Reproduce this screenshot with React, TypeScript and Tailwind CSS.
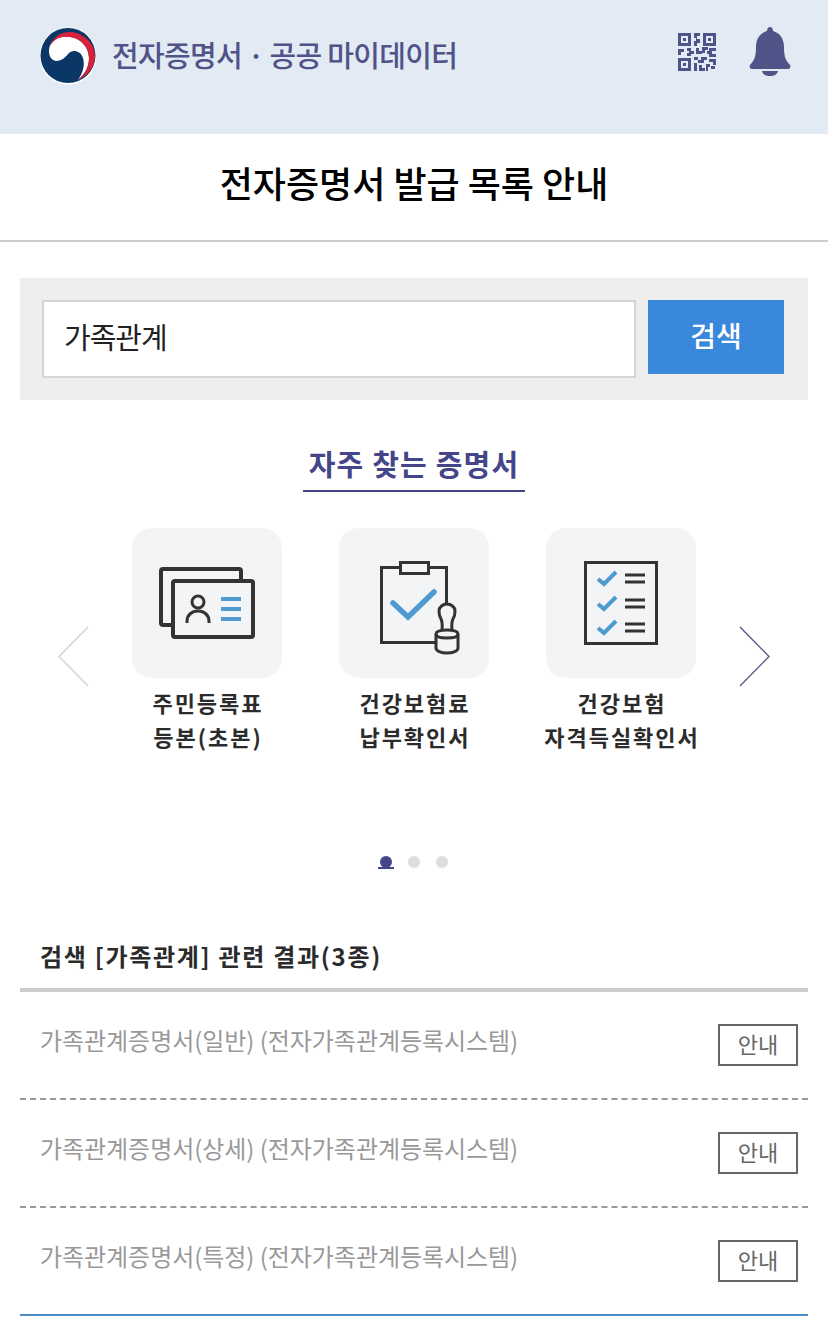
const font = { fontFamily: '"Noto Sans CJK KR", "Noto Sans", sans-serif' };

function Logo() {
  return (
    <svg width="58" height="58" viewBox="0 0 58 58" className="shrink-0">
      <circle cx="29" cy="29" r="28.5" fill="#fff" />
      <circle cx="29" cy="28.5" r="27.5" fill="#0b3766" />
      <path d="M10 24C10 14 19 9 29 10C41 10 50 20 50 31C50 40 46 47 39 53C44 46 46 38 44 31C42 24 34 22 30 26C26 31 22 34 17 34C12 33 10 29 10 24Z" fill="#fff" />
      <path d="M10 21C13 11 22 4 33 5C47 7 57 19 56 31C55 41 48 49 39 53C46 47 50 40 50 31C50 20 41 10 29 10C20 9 13 14 10 21Z" fill="#d9213c" />
    </svg>
  );
}

function QrIcon() {
  return (
    <svg width="38" height="38" viewBox="0 0 38 38" fill="#505388">
      <path fillRule="evenodd" d="M0 0H13V13H0ZM3 3V10H10V3ZM25 0H38V13H25ZM28 3V10H35V3ZM0 25H13V38H0ZM3 28V35H10V28Z" />
      <path d="M5 5H8V8H5ZM30 5H33V8H30ZM5 30H8V33H5ZM16 0H22V3H19V6H22V10H19V13H16V8H18V5H16ZM0 16H6V19H3V22H0ZM9 15H13V18H16V21H13V23H9V20H11V18H9ZM18 15H21V18H24V21H18ZM24 14H30V17H27V20H24ZM31 15H38V18H34V21H38V24H31V21H29V18H31ZM16 24H20V27H23V24H29V27H26V30H20V27H16ZM31 26H38V32H35V29H31ZM16 30H19V38H16ZM21 32H24V35H27V38H21ZM28 31H32V34H30V38H28ZM33 33H37V36H33Z" />
    </svg>
  );
}

function BellIcon() {
  return (
    <svg width="42" height="50" viewBox="0 0 42 50" fill="#505388">
      <path d="M21 0C23 0 24 2 24 4C31 6 35 12 35 20C35 28 36 33 41 38C42 40 41 42 39 42H3C1 42 0 40 1 38C6 33 7 28 7 20C7 12 11 6 18 4C18 2 19 0 21 0Z" />
      <path d="M13 44H29C28 48 25 49 21 49C17 49 14 48 13 44Z" />
    </svg>
  );
}

function Chevron({ right }: { right?: boolean }) {
  return (
    <svg width="32" height="62" viewBox="0 0 32 62" fill="none" stroke={right ? "#505388" : "#cfcfd8"} strokeWidth="1.3">
      <path d={right ? "M1 1L30 30.5L1 60" : "M31 1L2 30.5L31 60"} />
    </svg>
  );
}

function CardsIcon() {
  return (
    <svg width="150" height="150" viewBox="0 0 150 150" fill="none">
      <path d="M41 97H31A2 2 0 0 1 29 95V43A2 2 0 0 1 31 41H107A2 2 0 0 1 109 43V53" stroke="#333" strokeWidth="4" />
      <rect x="41" y="53" width="80" height="56" rx="2" stroke="#333" strokeWidth="4" />
      <circle cx="66" cy="74" r="6" stroke="#333" strokeWidth="3" />
      <path d="M55 95V93C55 87 60 83 66 83C72 83 77 87 77 93V95" stroke="#333" strokeWidth="3" />
      <path d="M89 71H109M89 81H109M89 91H109" stroke="#4f9bd1" strokeWidth="4" />
    </svg>
  );
}

function ClipboardIcon() {
  return (
    <svg width="150" height="150" viewBox="0 0 150 150" fill="none">
      <path d="M97 114.5H42.500V39.500H107.500V75" stroke="#333" strokeWidth="3" />
      <rect x="61.500" y="34.500" width="28" height="11" fill="#f3f4f6" stroke="#333" strokeWidth="3" />
      <path d="M54 75L69 89L95 64" stroke="#4f9bd1" strokeWidth="5.5" strokeLinecap="round" />
      <path d="M103 105C103 98 104 95 102 91C100 88 100 85 100 83C100 79 104 76 108 76C112 76 116 79 116 83C116 85 116 88 114 91C112 95 113 98 113 105Z" stroke="#333" strokeWidth="3" fill="#f3f4f6" />
      <path d="M97 106C97 103 101 102 108 102C115 102 119 103 119 106V120C119 123 114 125 108 125C102 125 97 123 97 120Z" stroke="#333" strokeWidth="3" fill="#f3f4f6" />
      <path d="M97 106C97 109 102 110 108 110C114 110 119 109 119 106" stroke="#333" strokeWidth="3" />
    </svg>
  );
}

function ChecklistIcon() {
  return (
    <svg width="150" height="150" viewBox="0 0 150 150" fill="none">
      <rect x="39.500" y="34.500" width="71" height="81" stroke="#333" strokeWidth="3" />
      <path d="M52 51L58 56L70 44M52 76L58 81L70 69M52 100L58 105L70 93" stroke="#4f9bd1" strokeWidth="4" />
      <path d="M79 47H99M79 54H99M79 72H99M79 79H99M79 96H99M79 103H99" stroke="#333" strokeWidth="3" />
    </svg>
  );
}

function Cert({ icon, lines, w }: { icon: React.ReactNode; lines: string[]; w: string }) {
  return (
    <div className={`flex flex-col items-center ${w}`}>
      <div className="w-[150px] h-[150px] rounded-[20px] bg-[#f3f4f6]">{icon}</div>
      <div className="mt-[7px] text-[22px] leading-[34px] font-bold tracking-[2px] pl-[2px] text-[#2b2b2b] text-center whitespace-nowrap">
        {lines.map((l) => (
          <div key={l}>{l}</div>
        ))}
      </div>
    </div>
  );
}

function Row({ text, border }: { text: string; border: string }) {
  return (
    <div className={`h-[108px] flex justify-between pl-[20px] pr-[10px] ${border}`}>
      <div className="pt-[31px] text-[24px] leading-[34px] tracking-[-0.05px] text-[#999]">{text}</div>
      <div className="mt-[32px] w-[80px] h-[42px] border-2 border-[#666] flex items-center justify-center text-[22px] text-[#666] pb-[4px]">
        안내
      </div>
    </div>
  );
}

export default function App() {
  return (
    <div className="w-[828px] h-[1323px] bg-white overflow-hidden" style={font}>
      <header className="h-[134px] bg-[#e2eaf3] flex items-start justify-between pl-[39px] pr-[37px] pt-[27px]">
        <div className="flex items-center gap-[15px]">
          <Logo />
          <span className="text-[29px] leading-[54px] font-medium tracking-[-0.7px] text-[#505388] whitespace-nowrap pb-[4px]">
            전자증명서 · 공공 마이데이터
          </span>
        </div>
        <div className="flex items-center gap-[33px]">
          <QrIcon />
          <BellIcon />
        </div>
      </header>

      <h1 className="h-[108px] border-b-2 border-[#ccc] flex items-center justify-center text-[36px] font-medium text-black pb-[10px]">
        전자증명서 발급 목록 안내
      </h1>

      <div className="mx-[20px] mt-[36px] h-[122px] bg-[#eee] pl-[22px] pr-[24px] pt-[22px] flex items-start gap-[12px]">
        <div className="w-[594px] h-[78px] border-2 border-[#d5d5d5] bg-white flex items-center pl-[20px] pb-[4px] text-[29px] text-[#222] tracking-[-1px]">
          가족관계
        </div>
        <div className="w-[136px] h-[74px] bg-[#3a88dc] flex items-center justify-center pb-[4px] text-[28px] font-medium text-white">
          검색
        </div>
      </div>

      <div className="flex justify-center mt-[44px]">
        <h2 className="w-[222px] h-[48px] border-b-2 border-[#45458a] text-center text-[29px] leading-[38px] font-bold text-[#45458a] tracking-[1.2px]">
          자주 찾는 증명서
        </h2>
      </div>

      <div className="flex items-start mt-[36px] pl-[57px]">
        <div className="pt-[98px] w-[75px]">
          <Chevron />
        </div>
        <div className="flex gap-[57px]">
          <Cert icon={<CardsIcon />} lines={["주민등록표", "등본(초본)"]} w="w-[150px]" />
          <Cert icon={<ClipboardIcon />} lines={["건강보험료", "납부확인서"]} w="w-[150px]" />
          <Cert icon={<ChecklistIcon />} lines={["건강보험", "자격득실확인서"]} w="w-[150px]" />
        </div>
        <div className="pt-[98px] pl-[43px]">
          <Chevron right />
        </div>
      </div>

      <div className="flex justify-center gap-[14px] mt-[103px] h-[13px] pr-[2px]">
        <div className="w-[16px] h-[13px] border-b-2 border-[#45458a] flex justify-center overflow-hidden">
          <div className="w-[12px] h-[12px] shrink-0 rounded-full bg-[#45458a]" />
        </div>
        <div className="w-[12px] h-[12px] rounded-full bg-[#ddd]" />
        <div className="w-[12px] h-[12px] ml-[2px] rounded-full bg-[#ddd]" />
      </div>

      <div className="mx-[20px] mt-[59px]">
        <div className="h-[64px] border-b-4 border-[#ccc] pl-[20px] text-[24px] leading-[56px] font-bold text-[#2b2b2b] tracking-[1.7px]">
          검색 [가족관계] 관련 결과(3종)
        </div>
        <Row text="가족관계증명서(일반) (전자가족관계등록시스템)" border="border-b-2 border-dashed border-[#999]" />
        <Row text="가족관계증명서(상세) (전자가족관계등록시스템)" border="border-b-2 border-dashed border-[#999]" />
        <Row text="가족관계증명서(특정) (전자가족관계등록시스템)" border="border-b-2 border-[#4a8cc9]" />
      </div>
    </div>
  );
}
